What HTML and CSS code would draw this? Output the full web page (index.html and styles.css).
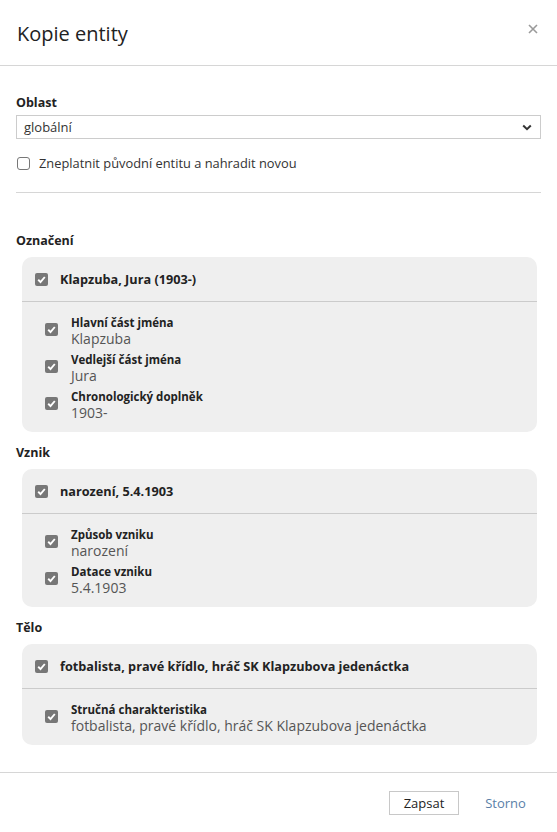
FILE: index.html
```html
<!DOCTYPE html>
<html lang="cs">
<head>
<meta charset="utf-8">
<title>Kopie entity</title>
<link rel="stylesheet" href="styles.css">
</head>
<body>
<div class="modal">
  <header class="modal-header">
    <h1 class="modal-title">Kopie entity</h1>
    <button class="close" type="button" aria-label="Zavřít">
      <svg width="10" height="10" viewBox="0 0 10 10"><path d="M1 1L9 9M9 1L1 9" stroke="#9a9a9a" stroke-width="1.6" fill="none"/></svg>
    </button>
  </header>
  <main class="modal-body">
    <div class="field-label">Oblast</div>
    <div class="select">
      <span>globální</span>
      <svg class="chevron" width="10" height="7" viewBox="0 0 10 7"><path d="M1.2 1.5L5 5.2L8.8 1.5" stroke="#333" stroke-width="2" fill="none"/></svg>
    </div>
    <div class="check-row"><span class="cb cb-off"></span><span>Zneplatnit původní entitu a nahradit novou</span></div>
    <hr class="divider">

    <section class="group">
      <h2 class="group-title">Označení</h2>
      <div class="card">
        <div class="card-head">
          <span class="cb cb-on"><svg viewBox="0 0 13 13"><path d="M3.2 6.8L5.5 9L9.8 4" stroke="#fff" stroke-width="1.9" fill="none"/></svg></span>
          <span class="head-text">Klapzuba, Jura (1903-)</span>
        </div>
        <div class="card-items">
          <div class="item">
            <span class="cb cb-on cb-item"><svg viewBox="0 0 13 13"><path d="M3.2 6.8L5.5 9L9.8 4" stroke="#fff" stroke-width="1.9" fill="none"/></svg></span>
            <div class="item-text"><div class="item-label">Hlavní část jména</div><div class="item-value">Klapzuba</div></div>
          </div>
          <div class="item">
            <span class="cb cb-on cb-item"><svg viewBox="0 0 13 13"><path d="M3.2 6.8L5.5 9L9.8 4" stroke="#fff" stroke-width="1.9" fill="none"/></svg></span>
            <div class="item-text"><div class="item-label">Vedlejší část jména</div><div class="item-value">Jura</div></div>
          </div>
          <div class="item">
            <span class="cb cb-on cb-item"><svg viewBox="0 0 13 13"><path d="M3.2 6.8L5.5 9L9.8 4" stroke="#fff" stroke-width="1.9" fill="none"/></svg></span>
            <div class="item-text"><div class="item-label">Chronologický doplněk</div><div class="item-value">1903-</div></div>
          </div>
        </div>
      </div>
    </section>

    <section class="group">
      <h2 class="group-title">Vznik</h2>
      <div class="card">
        <div class="card-head">
          <span class="cb cb-on"><svg viewBox="0 0 13 13"><path d="M3.2 6.8L5.5 9L9.8 4" stroke="#fff" stroke-width="1.9" fill="none"/></svg></span>
          <span class="head-text">narození, 5.4.1903</span>
        </div>
        <div class="card-items">
          <div class="item">
            <span class="cb cb-on cb-item"><svg viewBox="0 0 13 13"><path d="M3.2 6.8L5.5 9L9.8 4" stroke="#fff" stroke-width="1.9" fill="none"/></svg></span>
            <div class="item-text"><div class="item-label">Způsob vzniku</div><div class="item-value">narození</div></div>
          </div>
          <div class="item">
            <span class="cb cb-on cb-item"><svg viewBox="0 0 13 13"><path d="M3.2 6.8L5.5 9L9.8 4" stroke="#fff" stroke-width="1.9" fill="none"/></svg></span>
            <div class="item-text"><div class="item-label">Datace vzniku</div><div class="item-value">5.4.1903</div></div>
          </div>
        </div>
      </div>
    </section>

    <section class="group">
      <h2 class="group-title">Tělo</h2>
      <div class="card">
        <div class="card-head">
          <span class="cb cb-on"><svg viewBox="0 0 13 13"><path d="M3.2 6.8L5.5 9L9.8 4" stroke="#fff" stroke-width="1.9" fill="none"/></svg></span>
          <span class="head-text">fotbalista, pravé křídlo, hráč SK Klapzubova jedenáctka</span>
        </div>
        <div class="card-items">
          <div class="item">
            <span class="cb cb-on cb-item"><svg viewBox="0 0 13 13"><path d="M3.2 6.8L5.5 9L9.8 4" stroke="#fff" stroke-width="1.9" fill="none"/></svg></span>
            <div class="item-text"><div class="item-label">Stručná charakteristika</div><div class="item-value">fotbalista, pravé křídlo, hráč SK Klapzubova jedenáctka</div></div>
          </div>
        </div>
      </div>
    </section>
  </main>
  <footer class="modal-footer">
    <button class="btn btn-default" type="button">Zapsat</button>
    <button class="btn btn-link" type="button">Storno</button>
  </footer>
</div>
</body>
</html>
```

FILE: styles.css
```css
* { box-sizing: border-box; }
html, body { margin: 0; padding: 0; background: #fff; }
body {
  font-family: "Open Sans", "Noto Sans", sans-serif;
  color: #222;
  font-size: 13px;
}
.modal { width: 557px; }

.modal-header {
  height: 66px;
  border-bottom: 1px solid #d6d6d6;
  display: flex;
  align-items: flex-start;
  justify-content: space-between;
  padding: 0 19px 0 17px;
}
.modal-title {
  margin: 21px 0 0;
  font-size: 20px;
  font-weight: 400;
  line-height: 26px;
  color: #222;
}
.close {
  margin-top: 24px;
  border: 0;
  background: none;
  padding: 0;
  width: 10px;
  height: 10px;
  display: flex;
}

.modal-body { padding: 28px 16px 27px; }

.field-label {
  font-weight: 700;
  font-size: 12.5px;
  line-height: 18px;
}
.select {
  margin-top: 3px;
  height: 24px;
  border: 1px solid #cccccc;
  display: flex;
  align-items: center;
  justify-content: space-between;
  padding: 0 8px 0 7px;
  font-size: 13px;
  color: #333;
}
.chevron { margin-top: 1px; }

.check-row {
  margin-top: 15px;
  display: flex;
  align-items: center;
  gap: 9px;
  line-height: 18px;
  font-size: 12.85px;
  color: #333;
  padding-left: 1px;
}
.cb {
  flex: none;
  width: 13px;
  height: 13px;
  border-radius: 2px;
  display: block;
}
.cb svg { display: block; width: 13px; height: 13px; }
.cb-off { border: 1px solid #777; border-radius: 3px; }
.cb-on { background: #777; }

.divider {
  margin: 20px 0 0;
  border: 0;
  border-top: 1px solid #d6d6d6;
  height: 0;
}

.group-title {
  margin: 12px 0 7px;
  font-size: 12.5px;
  font-weight: 700;
  line-height: 18px;
}
.group:first-of-type .group-title { margin-top: 39px; }

.card {
  margin: 0 4px 0 6px;
  background: #efefef;
  border-radius: 10px;
}
.card-head {
  height: 45px;
  border-bottom: 1px solid #cbcbcb;
  display: flex;
  align-items: center;
  padding: 0 13px;
  gap: 12px;
}
.head-text {
  font-weight: 700;
  font-size: 12.7px;
  color: #222;
}
.card-items {
  padding: 14px 13px 11px 23px;
  display: flex;
  flex-direction: column;
  gap: 6px;
}
.item {
  display: flex;
  align-items: flex-start;
  gap: 13px;
}
.cb-item { margin-top: 7px; }
.item-label {
  font-size: 11.5px;
  font-weight: 700;
  line-height: 14px;
  color: #222;
}
.item-value {
  font-size: 14px;
  line-height: 17px;
  color: #555;
}

.modal-footer {
  border-top: 1px solid #d6d6d6;
  padding: 18px 16px 0;
  display: flex;
  justify-content: flex-end;
  gap: 11px;
}
.btn {
  font-family: inherit;
  font-size: 13px;
  height: 24px;
  line-height: 22px;
  padding: 0;
  background: #fff;
  cursor: pointer;
}
.btn-default {
  width: 70px;
  border: 1px solid #c8c8c8;
  color: #222;
}
.btn-link {
  border: 1px solid transparent;
  width: 71px;
  color: #5a7fa8;
}
```
